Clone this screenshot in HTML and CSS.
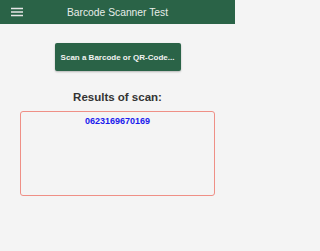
FILE: index.html
```html
<!DOCTYPE html>
<html>
<head>
<meta charset="utf-8">
<link rel="stylesheet" href="styles.css">
</head>
<body>
<div class="page">
<header class="topbar">
  <span class="menu">
    <svg width="12" height="10" viewBox="0 0 12 10"><path d="M0 1.5H12M0 5H12M0 8.5H12" stroke="#e6e6e6" stroke-width="1.4"/></svg>
  </span>
  <span class="title">Barcode Scanner Test</span>
</header>
<main class="content">
  <button class="scan-btn">Scan a Barcode or QR-Code...</button>
  <h2 class="results-title">Results of scan:</h2>
  <div class="results-box">
    <div class="code">0623169670169</div>
  </div>
</main>
</div>
</body>
</html>
```
FILE: styles.css
```css
html, body {
  margin: 0;
  padding: 0;
  background: #f4f4f4;
  font-family: "Liberation Sans", Arial, sans-serif;
}
.page {
  width: 235px;
  height: 251px;
}
.topbar {
  position: relative;
  height: 24px;
  background: #2a6347;
  display: flex;
  align-items: center;
  justify-content: center;
}
.menu {
  position: absolute;
  left: 11px;
  top: 7px;
  display: flex;
}
.title {
  color: #e8ede9;
  font-size: 10.3px;
}
.content {
  display: flex;
  flex-direction: column;
  align-items: center;
  padding-top: 19px;
}
.scan-btn {
  width: 126px;
  height: 28px;
  background: #2a6347;
  color: #f2f2f2;
  border: none;
  border-radius: 2px;
  font-family: "Liberation Sans", Arial, sans-serif;
  font-weight: bold;
  font-size: 8px;
  padding: 0;
  box-shadow: 0 1px 2px rgba(0,0,0,0.25);
}
.results-title {
  margin: 19px 0 0;
  font-size: 11.5px;
  font-weight: bold;
  color: #333;
  line-height: 14px;
}
.results-box {
  box-sizing: border-box;
  width: 195px;
  height: 85px;
  margin-top: 7px;
  border: 1px solid #ef8f86;
  border-radius: 3px;
  text-align: center;
}
.code {
  color: #1a1aee;
  font-weight: bold;
  font-size: 9px;
  margin-top: 4px;
}
```
